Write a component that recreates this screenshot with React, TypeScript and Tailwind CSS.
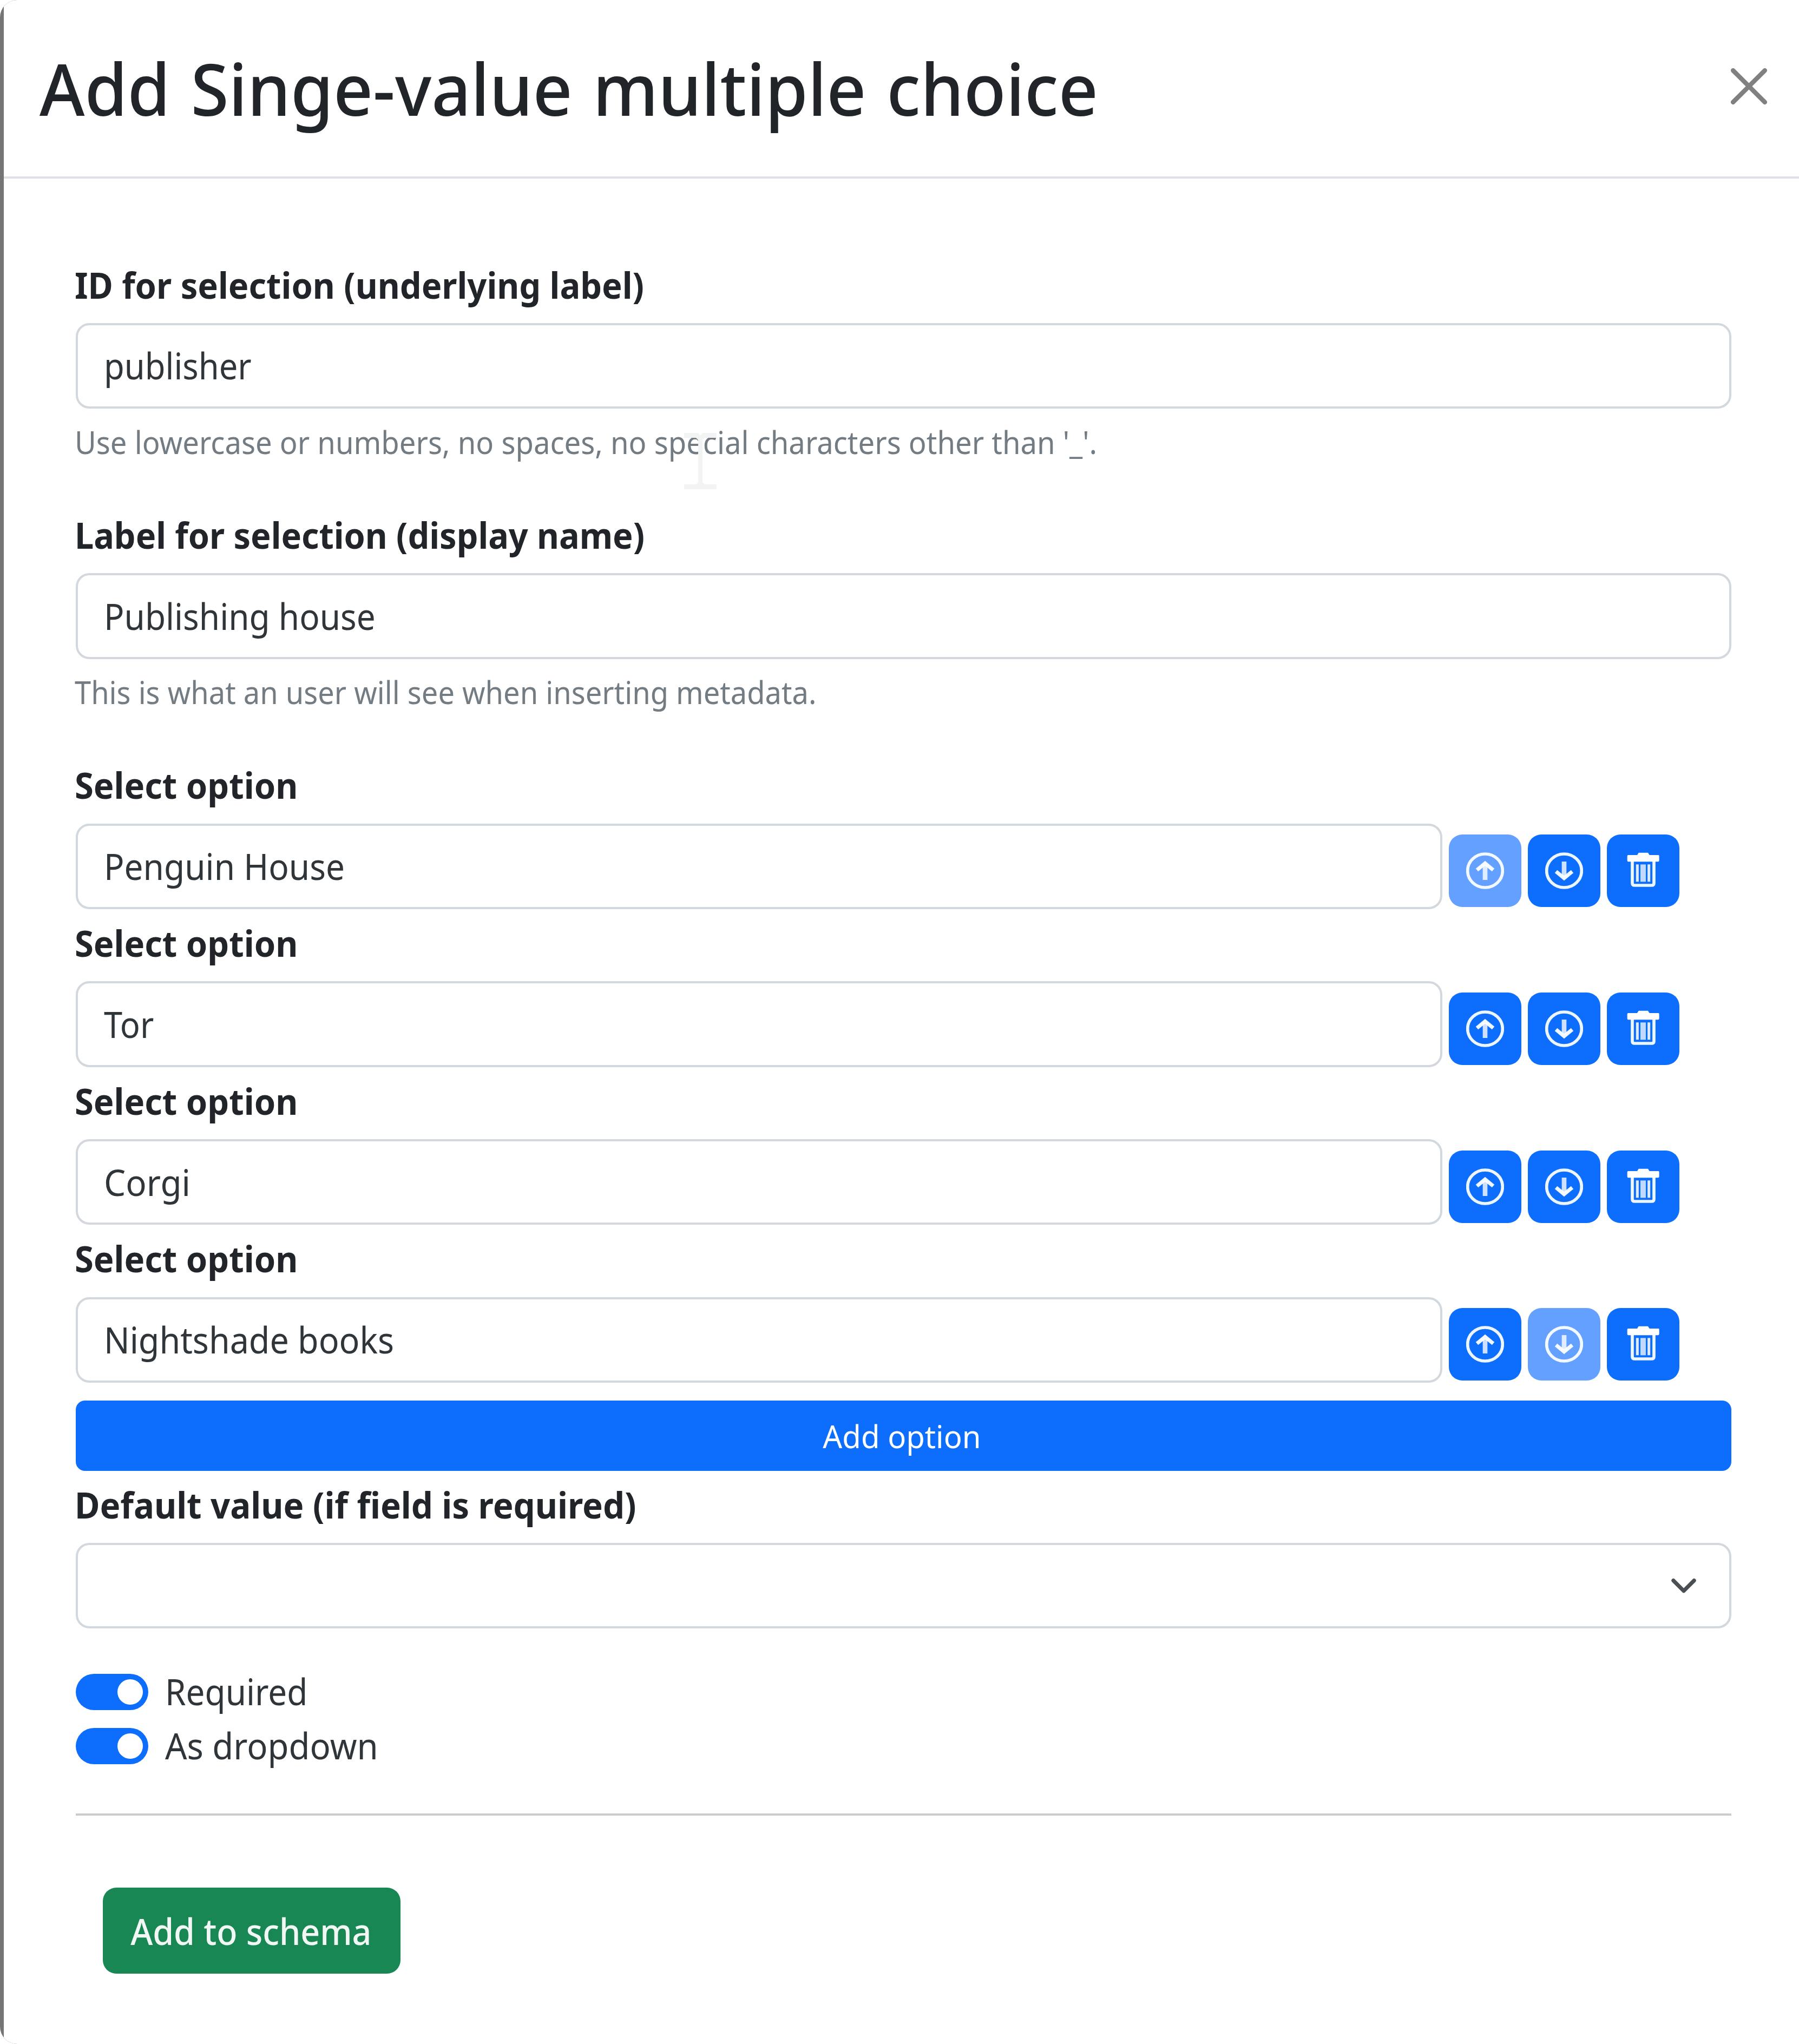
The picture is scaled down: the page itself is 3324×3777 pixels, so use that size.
import React, { useState } from "react";

const inputBox =
  "flex h-[158.33px] items-center rounded-[25px] border-[4px] border-[#d2d8dd] bg-white pt-px pl-[48px] text-[66.67px] leading-[100px] text-[#30353a]";

function Label({ children, fit }: { children: React.ReactNode; fit: string }) {
  return (
    <div className="-ml-[2px] h-[133.33px] pt-[13px] text-[66.67px] leading-[100px] font-bold whitespace-nowrap">
      <span className={`inline-block origin-left ${fit}`}>{children}</span>
    </div>
  );
}

function Hint({ children, fit }: { children: React.ReactNode; fit: string }) {
  return (
    <p className="mt-[16.67px] mb-[66.67px] -ml-[2px] h-[87.5px] pt-px text-[58.33px] leading-[87.5px] whitespace-nowrap text-[#737b83]">
      <span className={`inline-block origin-left ${fit}`}>{children}</span>
    </p>
  );
}

function CircleArrow({ down = false }: { down?: boolean }) {
  return (
    <svg viewBox="0 0 210 210" className={`size-[70px] ${down ? "rotate-180" : ""}`} fill="none" stroke="#fff">
      <ellipse cx="105" cy="105" rx="97" ry="93" strokeWidth="17" opacity="0.93" />
      <path d="M105 72V156" strokeWidth="26" opacity="0.8" />
      <path d="M60 101L105 64L150 101" strokeWidth="21" opacity="0.95" />
    </svg>
  );
}

function Trash() {
  return (
    <svg viewBox="0 0 210 210" className="size-[70px]" fill="#fff">
      <path d="M80 5H132L140 18H190Q194 18 194 24V48Q194 55 187 55H23Q17 55 17 48V24Q17 18 23 18H72Z" />
      <path d="M45 52V173Q45 186 58 186H152Q165 186 165 173V52" fill="none" stroke="#fff" strokeWidth="17" opacity="0.93" />
      <path d="M73 70V166M137 70V166" stroke="#fff" strokeWidth="15" opacity="0.88" />
      <path d="M105 70V166" stroke="#fff" strokeWidth="30" opacity="0.74" />
    </svg>
  );
}

function IconButton({ children, disabled, label }: { children: React.ReactNode; disabled?: boolean; label: string }) {
  return (
    <button
      aria-label={label}
      disabled={disabled}
      className={`flex size-[134px] shrink-0 items-center justify-center rounded-[25px] ${disabled ? "bg-[#63a0ff]" : "bg-[#0d6efd]"}`}
    >
      {children}
    </button>
  );
}

function Switch({ label, fit }: { label: string; fit: string }) {
  const [on, setOn] = useState(true);
  return (
    <div className="flex h-[100px] items-start">
      <button
        role="switch"
        aria-checked={on}
        aria-label={label}
        onClick={() => setOn(!on)}
        className={`mt-[16.5px] flex h-[67px] w-[134px] items-center rounded-full px-[10px] ${on ? "justify-end bg-[#0d6efd]" : "justify-start bg-[#ced4da]"}`}
      >
        <span className="size-[47px] rounded-full bg-white" />
      </button>
      <span className="ml-[31px] text-[66.67px] leading-[100px] whitespace-nowrap text-[#30353a]">
        <span className={`inline-block origin-left ${fit}`}>{label}</span>
      </span>
    </div>
  );
}

const options = [
  { name: "Penguin House", fit: "scale-x-[0.932]" },
  { name: "Tor", fit: "scale-x-[0.92]" },
  { name: "Corgi", fit: "scale-x-[0.955]" },
  { name: "Nightshade books", fit: "scale-x-[0.941]" },
];

export default function App() {
  return (
    <div className="h-[3777px] w-[3324px] overflow-hidden bg-white">
      <div className="h-[3777px] overflow-hidden rounded-l-[32px] bg-[#757575] pl-[7px] font-['Noto_Sans',sans-serif] text-[#212529]">
        <div className="flex h-full flex-col bg-white">
          <header className="flex h-[330px] shrink-0 items-start justify-between border-b-[4px] border-[#dee2e6] pr-[59.5px] pl-[66px]">
            <h1 className="mt-[82px] text-[133.33px] leading-[160px] font-medium [word-spacing:5px] whitespace-nowrap">
              <span className="inline-block origin-left scale-x-[0.956]">Add Singe-value multiple choice</span>
            </h1>
            <svg viewBox="0 0 16 16" className="mt-[125.5px] size-[67px]" fill="#808080">
              <path d="M.293.293a1 1 0 0 1 1.414 0L8 6.586 14.293.293a1 1 0 1 1 1.414 1.414L9.414 8l6.293 6.293a1 1 0 0 1-1.414 1.414L8 9.414l-6.293 6.293a1 1 0 0 1-1.414-1.414L6.586 8 .293 1.707a1 1 0 0 1 0-1.414z" />
            </svg>
          </header>

          <main className="flex flex-col pt-[133.5px] pr-[125px] pl-[132.5px]">
            <Label fit="scale-x-[0.947]">ID for selection (underlying label)</Label>
            <div className={inputBox}>
              <span className="inline-block origin-left scale-x-[0.922]">publisher</span>
            </div>
            <div className="relative">
              <Hint fit="scale-x-[0.9325]">Use lowercase or numbers, no spaces, no special characters other than '_'.</Hint>
              <svg viewBox="0 0 60 104" className="absolute top-[45px] left-[1124px] h-[104px] w-[60px]" fill="#f1f4f3">
                <path d="M0 0H26L30 5L34 0H60V9H38L34 13V91L38 95H60V104H0V95H22L26 91V13L22 9H0Z" />
              </svg>
            </div>

            <Label fit="scale-x-[0.944]">Label for selection (display name)</Label>
            <div className={inputBox}>
              <span className="inline-block origin-left scale-x-[0.931]">Publishing house</span>
            </div>
            <Hint fit="scale-x-[0.929]">This is what an user will see when inserting metadata.</Hint>

            {options.map((o, i) => (
              <div key={o.name}>
                <Label fit="scale-x-[0.949]">Select option</Label>
                <div className="flex h-[158.33px] gap-[12px]">
                  <div className={`${inputBox} w-[2525.5px] shrink-0`}>
                    <span className={`inline-block origin-left ${o.fit}`}>{o.name}</span>
                  </div>
                  <div className="flex gap-[12px] pt-[20.5px]">
                    <IconButton label="Move up" disabled={i === 0}>
                      <CircleArrow />
                    </IconButton>
                    <IconButton label="Move down" disabled={i === options.length - 1}>
                      <CircleArrow down />
                    </IconButton>
                    <IconButton label="Remove">
                      <Trash />
                    </IconButton>
                  </div>
                </div>
              </div>
            ))}

            <button className="mt-[32.5px] flex h-[130px] items-center justify-center rounded-[17px] bg-[#0d6efd] pt-[3px] pr-[5px] text-[58.33px] leading-[87.5px] text-white">
              <span className="inline-block scale-x-[0.965]">Add option</span>
            </button>

            <Label fit="scale-x-[0.952]">Default value (if field is required)</Label>
            <div className="flex h-[158.33px] items-center justify-end rounded-[25px] border-[4px] border-[#d2d8dd] pr-[54px]">
              <svg viewBox="0 0 16 16" className="size-[60px]" fill="none" stroke="#4a4f54" strokeWidth="1.9">
                <path d="M2.9 5.5L8 10.6L13.1 5.5" strokeLinecap="round" strokeLinejoin="round" />
              </svg>
            </div>

            <div className="mt-[67px]">
              <Switch label="Required" fit="scale-x-[0.93]" />
              <Switch label="As dropdown" fit="scale-x-[0.951]" />
            </div>

            <div className="mt-[75px] h-[4.17px] w-full bg-[#c9cbcc]" />

            <button className="mt-[133px] ml-[50.5px] flex h-[158.5px] w-[550px] items-center justify-center rounded-[25px] bg-[#198754] pt-[2px] pr-[2px] text-[66.67px] leading-[100px] font-medium whitespace-nowrap text-[#f1f7f4]">
              <span className="inline-block scale-x-[0.94]">Add to schema</span>
            </button>
          </main>
        </div>
      </div>
    </div>
  );
}
